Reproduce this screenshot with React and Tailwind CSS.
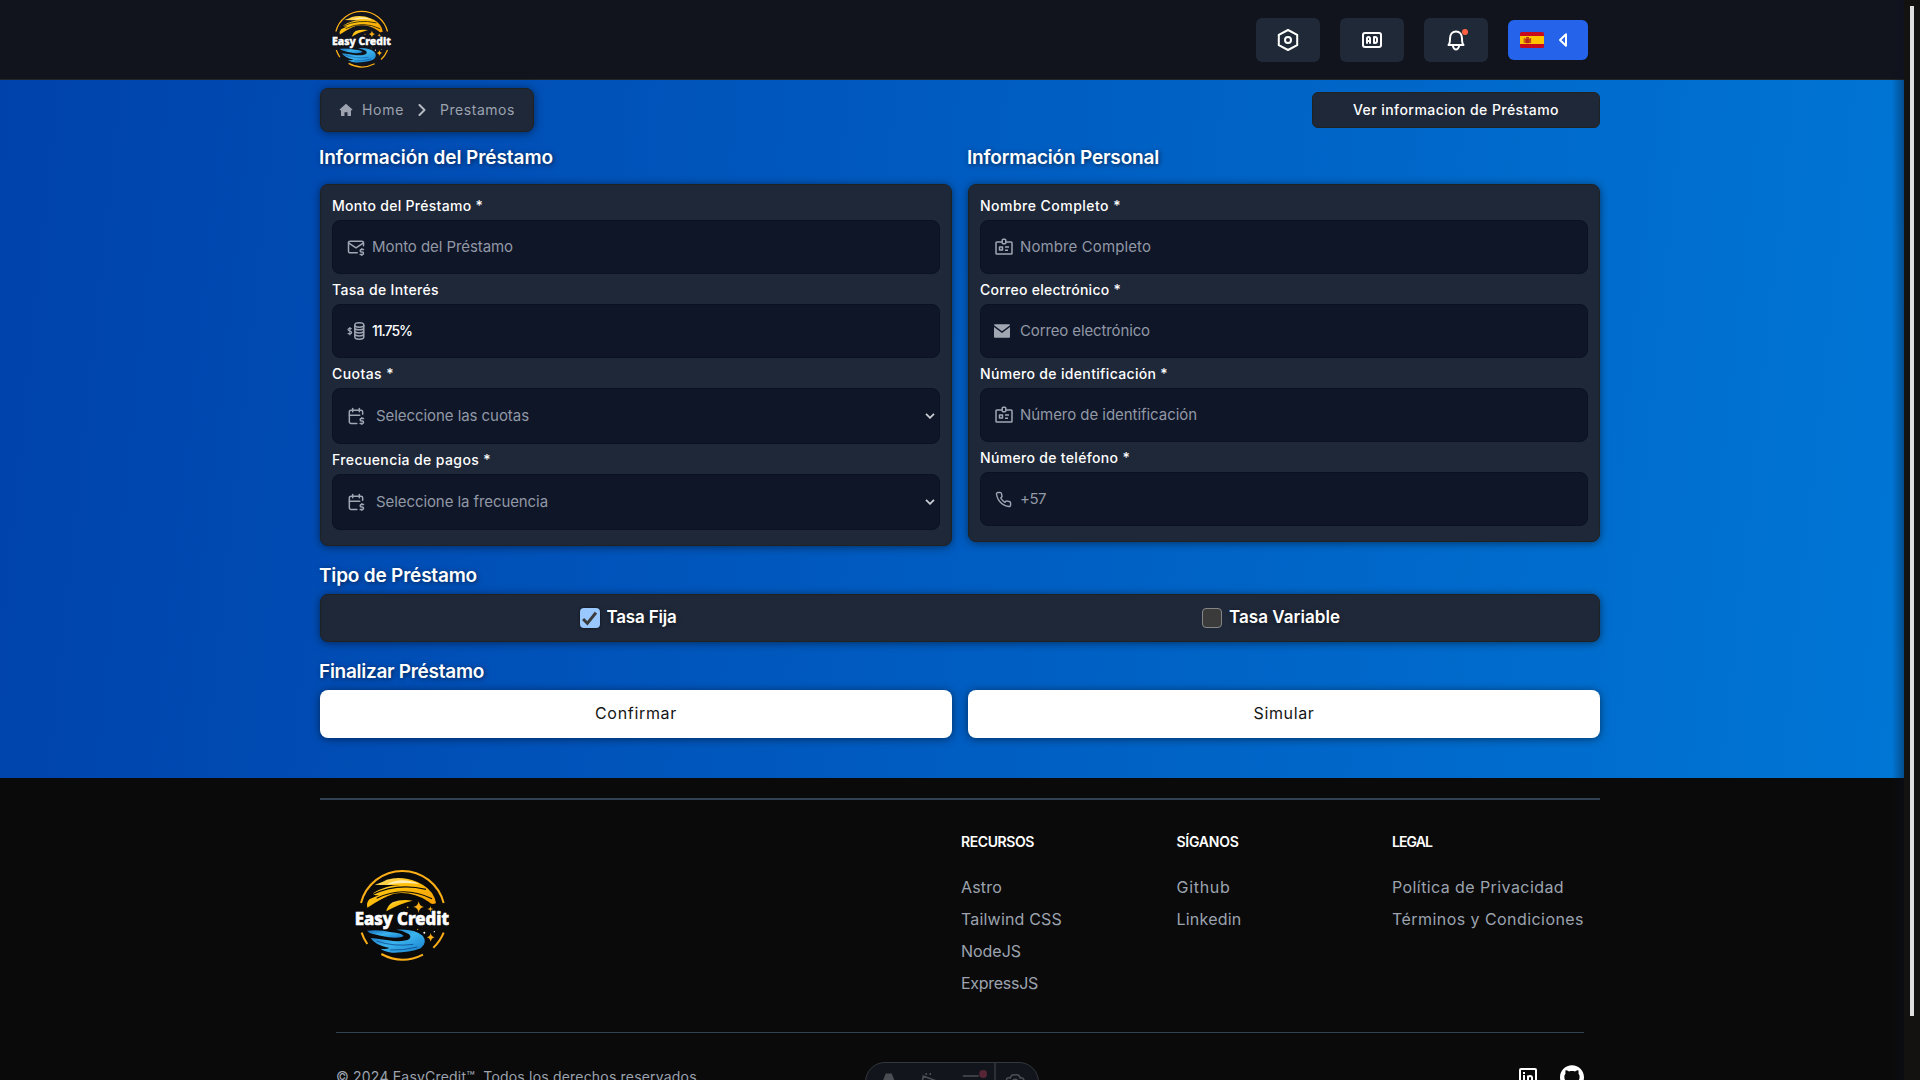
import { useLayoutEffect, useRef, useState } from "react";
import { TbBadgeAd, TbMailDollar, TbCalendarDollar } from "react-icons/tb";
import { SiGithub } from "react-icons/si";
import { LuPhone } from "react-icons/lu";

/* Text whose letter spacing is adjusted so that it spans a given width. */
function Fit({ w, children, className = "" }) {
  const ref = useRef(null);
  const [ls, setLs] = useState(0);
  useLayoutEffect(() => {
    const natural = ref.current.getBoundingClientRect().width;
    setLs((w - natural) / children.length);
  }, [w, children]);
  return (
    <span ref={ref} className={"inline-block whitespace-nowrap " + className} style={{ letterSpacing: ls + "px" }}>
      {children}
    </span>
  );
}

function Logo({ className }) {
  return (
    <svg viewBox="60 50 312 288" className={className}>
      <defs>
        <linearGradient id="gold" x1="0" y1="0" x2="1" y2="1">
          <stop offset="0" stopColor="#ffe9a0" />
          <stop offset="0.35" stopColor="#ffc20e" />
          <stop offset="1" stopColor="#f59a00" />
        </linearGradient>
        <linearGradient id="sea" x1="0" y1="0" x2="1" y2="1">
          <stop offset="0" stopColor="#1567b8" />
          <stop offset="0.5" stopColor="#3bb4ee" />
          <stop offset="1" stopColor="#167ccb" />
        </linearGradient>
      </defs>
      <g fill="none" stroke="#fbae17" strokeWidth="6">
        <path d="M93 158 A128 128 0 0 1 341 158" />
        <path d="M95 247 Q101 266 112 281" />
        <path d="M341 247 Q330 274 310 292" />
        <path d="M154 311 Q216 345 279 313" />
      </g>
      <g fill="url(#gold)">
        <path d="M134 103 Q158 96 170 88 Q216 76 262 95 L278 103 Q312 123 318 158 Q306 166 296 154 Q246 121 192 130 Q160 140 112 172 Q108 158 118 147 Q134 139 148 134 Q124 136 130 128 Q170 104 212 104 Q166 104 134 103Z" />
        <path d="M169 183 Q172 166 188 156 Q214 146 248 151 Q208 160 169 183Z" />
      </g>
      <g fill="none" stroke="#0a0a0a" strokeWidth="3.5">
        <path d="M124 134 Q200 96 288 117" />
        <path d="M140 144 Q220 104 306 145" />
      </g>
      <path d="M168 103 Q215 78 268 101 Q214 94 168 103Z" fill="#ffedb5" />
      <g fill="#fbae17">
        <path d="M266 153 Q268 168 282 170 Q268 172 266 188 Q264 172 250 170 Q264 168 266 153Z" />
        <path d="M301 167 L303 174 L310 176 L303 178 L301 186 L299 178 L292 176 L299 174Z" />
        <path d="M302 248 Q304 259 314 261 Q304 263 302 274 Q300 263 290 261 Q300 259 302 248Z" />
        <circle cx="233" cy="171" r="2.5" />
        <circle cx="283" cy="247" r="3" fill="#fff" />
        <circle cx="313" cy="244" r="2" fill="#fff" />
        <circle cx="263" cy="237" r="2" />
      </g>
      <path
        fill="url(#sea)"
        d="M111 241 Q150 237 184 246 Q214 248 221 257 Q212 264 176 261 Q150 257 130 251 Q116 248 111 241Z"
      />
      <path
        fill="url(#sea)"
        d="M122 263 Q150 266 190 272 Q226 274 238 266 Q248 254 228 247 Q216 240 198 238 Q252 234 278 256 Q294 276 272 294 Q236 308 186 307 Q160 303 152 295 Q172 297 178 293 Q134 284 122 263Z"
      />
      <path fill="none" stroke="#0c4d92" strokeWidth="2.5" d="M140 272 Q190 290 250 282 M180 299 Q220 301 262 290" />
      <text
        x="74"
        y="223"
        textLength="283"
        lengthAdjust="spacingAndGlyphs"
        fill="#fff"
        stroke="#fff"
        strokeWidth="2"
        fontFamily="Noto Sans, sans-serif"
        fontWeight="800"
        fontSize="54"
      >
        Easy Credit
      </text>
    </svg>
  );
}

function HexIcon() {
  return (
    <svg viewBox="0 0 24 24" className="size-6" fill="none" stroke="#fff" strokeWidth="2" strokeLinejoin="round">
      <path d="M12 2 L21.200 6.800 V17.200 L12 22 L2.800 17.200 V6.800Z" />
      <circle cx="12" cy="12" r="3" />
    </svg>
  );
}

function BellIcon() {
  return (
    <svg viewBox="0 0 24 24" className="size-6" fill="none" stroke="#fff" strokeWidth="2" strokeLinejoin="round" strokeLinecap="round">
      <path d="M4.500 17 H19.500 C18 15.500 18 13.500 18 10.500 C18 6.500 15.500 3.500 12 3.500 C8.500 3.500 6 6.500 6 10.500 C6 13.500 6 15.500 4.500 17Z" />
      <path d="M9 18.500 Q10 21.500 12 21.500 Q14 21.500 15 18.500" />
    </svg>
  );
}

function Flag() {
  return (
    <svg viewBox="0 0 24 16" className="h-4 w-6">
      <clipPath id="fc"><rect width="24" height="16" rx="1.500" /></clipPath>
      <g clipPath="url(#fc)">
        <rect width="24" height="16" fill="#c60b1e" />
        <rect y="4" width="24" height="8" fill="#ffc400" />
        <rect x="5.200" y="6.200" width="4.600" height="5" rx="1" fill="#b8251a" />
        <path d="M4.200 6 V11 M10.600 6 V11 M6 5.500 H9" stroke="#a5301c" strokeWidth="0.900" />
      </g>
    </svg>
  );
}

function CoinsIcon({ className }) {
  return (
    <svg viewBox="0 0 18 18" className={className} fill="none" stroke="currentColor" strokeWidth="1.500">
      <ellipse cx="12.300" cy="3" rx="4.500" ry="2.200" />
      <path d="M7.800 3 V15 C7.800 16.400 9.800 17.200 12.300 17.200 S16.800 16.400 16.800 15 V3 M7.800 6.200 C8.500 8.400 16.100 8.400 16.800 6.200 M7.800 9.300 C8.500 11.500 16.100 11.500 16.800 9.300 M7.800 12.300 C8.500 14.500 16.100 14.500 16.800 12.300" />
      <path d="M4.700 6.900 C3.500 5.900 1 6.200 1 7.700 C1 9.400 4.700 8.600 4.700 10.500 C4.700 12 1.800 12.200 .7 11.200 M2.900 5 V13.200" strokeWidth="1.200" />
    </svg>
  );
}

function BadgeIcon({ className }) {
  return (
    <svg viewBox="0 0 18 18" className={className} fill="none" stroke="currentColor" strokeWidth="1.500" strokeLinejoin="round">
      <path d="M7 4 H1.800 Q1 4 1 4.800 V15.200 Q1 16 1.800 16 H16.200 Q17 16 17 15.200 V4.800 Q17 4 16.200 4 H11" />
      <rect x="7.200" y="1.200" width="3.600" height="4.600" rx="1" />
      <rect x="4.500" y="9" width="3" height="3" />
      <path d="M10 9 H14 M10 12.300 H13" />
    </svg>
  );
}

function MailIcon({ className }) {
  return (
    <svg viewBox="0 0 16 14" className={className} fill="currentColor">
      <path d="M0 1.200 Q0 .3 .9 .3 H15.100 Q16 .3 16 1.200 L8 7.200Z" />
      <path d="M0 3 L8 9 L16 3 V12.800 Q16 13.700 15.100 13.700 H.9 Q0 13.700 0 12.800Z" />
    </svg>
  );
}

function NavButton({ children }) {
  return <button className="relative flex h-11 w-16 items-center justify-center rounded-md bg-[#1f2937]">{children}</button>;
}

function Heading({ w, children, className = "" }) {
  return (
    <h2 className={"flex h-7 items-center pt-px text-[19px] font-semibold text-white [text-shadow:1px_1px_5px_rgba(0,0,0,0.6)] " + className}>
      <Fit w={w} className="-ml-px">{children}</Fit>
    </h2>
  );
}

function Field({ label, lw, icon, text, w, value, select }) {
  return (
    <div className="mb-1.5">
      <label className="mb-1 flex h-5 items-center text-sm font-medium text-white">
        <Fit w={lw}>{label}</Fit>
      </label>
      <div
        className={
          "flex items-center rounded-lg border border-[#0a1122] bg-[#0e1628] pl-[13px] text-[15px] text-[#9298a5] " +
          (select ? "h-14" : "h-[54px]")
        }
      >
        <span className={"flex shrink-0 items-center text-[#a0a6b2] " + (select ? "w-[31px]" : "w-[27px]")}>{icon}</span>
        <Fit w={w} className={value ? "-ml-px text-sm font-medium text-white" : "-ml-px"}>
          {text}
        </Fit>
        {select && (
          <svg viewBox="0 0 10 6" className="mr-1 ml-auto h-[6px] w-[10px] text-[#c9ccd2]" fill="none" stroke="currentColor" strokeWidth="1.800">
            <path d="M1 .8 L5 4.800 L9 .8" />
          </svg>
        )}
      </div>
    </div>
  );
}

const panel = "rounded-lg border border-[#20221f] bg-[#1f2839] shadow-[0_1px_8px_rgba(0,0,0,0.5)]";

const columns = [
  { title: "RECURSOS", w: 73, links: [["Astro", 41], ["Tailwind CSS", 101], ["NodeJS", 60], ["ExpressJS", 77]] },
  { title: "SÍGANOS", w: 62, links: [["Github", 54], ["Linkedin", 65]] },
  { title: "LEGAL", w: 40, links: [["Política de Privacidad", 172], ["Términos y Condiciones", 192]] },
];

export default function App() {
  return (
    <div className="flex h-[1080px] w-[1920px] overflow-hidden bg-[#0a0a0a] font-[Inter,sans-serif]">
      <div className="relative flex h-full w-[1904px] shrink-0 flex-col">
        <header className="h-20 shrink-0 border-b border-[#222624] bg-[#11141c]">
          <div className="ml-[320px] flex h-full w-[1280px] items-center justify-between pr-3 pl-[9px]">
            <Logo className="-mt-px h-[60px] w-[65px]" />
            <div className="flex items-center gap-5">
              <NavButton><HexIcon /></NavButton>
              <NavButton><TbBadgeAd className="size-6 text-white" /></NavButton>
              <NavButton>
                <BellIcon />
                <span className="absolute top-[11px] right-5 size-[6px] rounded-full bg-[#ff6240]" />
              </NavButton>
              <button className="flex h-10 w-20 items-center rounded-md bg-[#2563eb] pl-3">
                <Flag />
                <svg viewBox="0 0 10 16" className="ml-[14px] h-4 w-[10px]" fill="none" stroke="#fff" strokeWidth="2" strokeLinejoin="round">
                  <path d="M8 2.200 V13.800 L2 8Z" />
                </svg>
              </button>
            </div>
          </div>
        </header>

        <main className="h-[698px] shrink-0 bg-linear-[96deg] from-[#0042ac] to-[#0076d5] pt-2">
          <div className="ml-[320px] w-[1280px]">
            <div className="flex h-11 items-center justify-between">
              <nav className={"flex h-11 w-[214px] items-center pl-[18px] text-sm text-[#9ca3af] " + panel}>
                <svg viewBox="0 0 14 14" className="mr-[9px] size-[14px]" fill="currentColor">
                  <path d="M7 .8 L13.500 6.600 L12.600 7.600 L12 7.100 V13 H8.500 V9.300 H5.500 V13 H2 V7.100 L1.400 7.600 L.5 6.600Z" />
                </svg>
                <Fit w={42}>Home</Fit>
                <svg viewBox="0 0 8 12" className="mr-[13px] ml-[14px] h-3 w-2 text-[#b4b9c2]" fill="none" stroke="currentColor" strokeWidth="2" strokeLinecap="round" strokeLinejoin="round">
                  <path d="M1.500 1 L6.500 6 L1.500 11" />
                </svg>
                <Fit w={75} className="ml-px">Prestamos</Fit>
              </nav>
              <button className="flex h-9 w-72 items-center justify-center rounded-md border border-[#20221f] bg-[#1f2839] text-sm font-medium text-white">
                <Fit w={206}>Ver informacion de Préstamo</Fit>
              </button>
            </div>

            <div className="mt-3 grid grid-cols-2 items-start gap-4">
              <section>
                <Heading w={234} className="mb-3">Información del Préstamo</Heading>
                <div className={"px-[11px] pt-[11px] pb-[9px] " + panel}>
                  <Field label="Monto del Préstamo *" lw={151} text="Monto del Préstamo" w={141} icon={<TbMailDollar className="size-5" strokeWidth={1.800} />} />
                  <Field label="Tasa de Interés" lw={107} text="11.75%" w={40} value icon={<CoinsIcon className="ml-px size-[18px]" />} />
                  <Field label="Cuotas *" lw={62} text="Seleccione las cuotas" w={153} select icon={<TbCalendarDollar className="size-5" strokeWidth={1.800} />} />
                  <Field label="Frecuencia de pagos *" lw={159} text="Seleccione la frecuencia" w={172} select icon={<TbCalendarDollar className="size-5" strokeWidth={1.800} />} />
                </div>
              </section>
              <section>
                <Heading w={192} className="mb-3">Información Personal</Heading>
                <div className={"px-[11px] pt-[11px] pb-[9px] " + panel}>
                  <Field label="Nombre Completo *" lw={141} text="Nombre Completo" w={131} icon={<BadgeIcon className="ml-px size-[18px]" />} />
                  <Field label="Correo electrónico *" lw={141} text="Correo electrónico" w={130} icon={<MailIcon className="h-[14px] w-4" />} />
                  <Field label="Número de identificación *" lw={188} text="Número de identificación" w={177} icon={<BadgeIcon className="ml-px size-[18px]" />} />
                  <Field label="Número de teléfono *" lw={150} text="+57" w={26} icon={<LuPhone className="ml-px size-[17px]" />} />
                </div>
              </section>
            </div>

            <Heading w={158} className="mt-4 mb-1">Tipo de Préstamo</Heading>
            <div className={"grid h-12 grid-cols-[614px_656px] items-center gap-2 text-[17px] font-semibold text-white [text-shadow:0_1px_4px_rgba(0,0,0,0.5)] " + panel}>
              <label className="flex items-center justify-center gap-[7px]">
                <span className="flex size-5 items-center justify-center rounded-sm bg-[#99c8ff] shadow-[0_0_3px_rgba(0,0,0,0.6)]">
                  <svg viewBox="0 0 14 14" className="size-[15px]" fill="none" stroke="#3b3b3b" strokeWidth="2.800">
                    <path d="M1 7.500 L5 11.500 L13 1.500" />
                  </svg>
                </span>
                <Fit w={70}>Tasa Fija</Fit>
              </label>
              <label className="flex items-center justify-center gap-[7px]">
                <span className="size-5 rounded-sm border border-[#858585] bg-[#3b3b3b]" />
                <Fit w={111}>Tasa Variable</Fit>
              </label>
            </div>

            <Heading w={165} className="mt-4 mb-1">Finalizar Préstamo</Heading>
            <div className="grid grid-cols-2 gap-4 text-base text-[#151515]">
              <button className="h-12 rounded-lg bg-white pb-0.5 shadow-[0_1px_8px_rgba(0,0,0,0.5)]"><Fit w={82}>Confirmar</Fit></button>
              <button className="h-12 rounded-lg bg-white pb-0.5 shadow-[0_1px_8px_rgba(0,0,0,0.5)]"><Fit w={61}>Simular</Fit></button>
            </div>
          </div>
        </main>

        <footer className="ml-[320px] w-[1280px] shrink-0 pt-5">
          <div className="h-[2px] bg-[#334155]" />
          <div className="flex h-[232px] px-4">
            <div className="w-[626px] pt-[67px] pl-[14px]">
              <Logo className="h-24 w-[104px]" />
            </div>
            <div className="grid grid-cols-[215.500px_215.500px_192px] pt-8">
              {columns.map((c) => (
                <div key={c.title}>
                  <h3 className="mb-[19px] flex h-5 items-center text-sm font-semibold text-white"><Fit w={c.w}>{c.title}</Fit></h3>
                  <ul className="text-base text-[#9ca3af]">
                    {c.links.map(([t, w]) => (
                      <li key={t} className="flex h-8 items-center"><Fit w={w}>{t}</Fit></li>
                    ))}
                  </ul>
                </div>
              ))}
            </div>
          </div>
          <div className="mx-4 h-px bg-[#334155]" />
          <div className="mx-4 flex justify-between pt-8 text-[#9ca3af]">
            <div className="pt-[2px] text-sm leading-5"><Fit w={365}>© 2024 EasyCredit™. Todos los derechos reservados.</Fit></div>
            <div className="flex gap-[23px] text-white">
              <svg viewBox="0 0 18 18" className="mt-[3px] size-[18px]" fill="none" stroke="currentColor" strokeWidth="2">
                <rect x="1" y="1" width="16" height="16" rx="1" />
                <path d="M5 7 V14 M5 4 V6 M9 14 V7.500 M9 10 Q9 8 11 8 Q13 8 13 10 V14" />
              </svg>
              <SiGithub className="size-6" />
            </div>
          </div>
        </footer>

        <div className="absolute top-[1062px] left-[865px] flex h-10 w-[174px] items-start rounded-[20px] border border-[#34373f] bg-[#12151c] text-[#4b4e52]">
          <svg viewBox="0 0 174 18" className="h-[18px] w-[174px]" fill="none" stroke="currentColor" strokeWidth="1.600">
            <path d="M17 18 L20 10.500 H26 L29 18Z" fill="currentColor" stroke="none" />
            <path d="M57 18 L58 13 L71 18 M61 12 V10 M65 12 V10" />
            <path d="M98 13 H114 M109 18 H118" />
            <circle cx="118.500" cy="11" r="4" fill="#562636" stroke="none" />
            <path d="M130.500 0 V18" stroke="#34373f" />
            <path d="M142 18 Q142 14 146 15 Q147 11 151 12 Q155 11 156 15 Q159 14 160 18 M148 18 Q151 15 154 18" />
          </svg>
        </div>
        <div className="pointer-events-none absolute top-0 right-0 h-full w-3 bg-linear-to-r from-transparent to-[#0a1020]/40" />
      </div>
      <div className="flex h-full w-4 shrink-0 justify-center bg-[#131211] pt-[6px]">
        <div className="h-[1010px] w-1 bg-[#dedede]" />
      </div>
    </div>
  );
}
